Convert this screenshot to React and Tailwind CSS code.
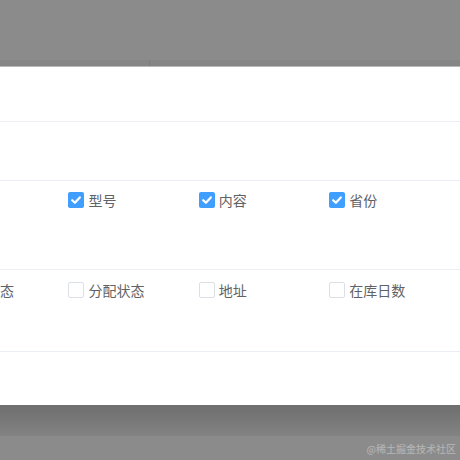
import React from 'react';

const rowOne = [
  { label: '编号', checked: true },
  { label: '型号', checked: true },
  { label: '内容', checked: true },
  { label: '省份', checked: true },
];

const rowTwo = [
  { label: '库存状态', checked: false },
  { label: '分配状态', checked: false },
  { label: '地址', checked: false },
  { label: '在库日数', checked: false },
];

const Check = ({ label, checked }) => (
  <div className="w-[130.4px] shrink-0 flex items-center gap-[4px]">
    {checked ? (
      <span className="w-[16px] h-[16px] rounded-[2px] bg-[#409eff] flex items-center justify-center">
        <svg width="12" height="12" viewBox="0 0 12 12" fill="none">
          <path d="M2.2 6.2 L4.9 8.8 L9.8 3.4" stroke="#fff" strokeWidth="2.2" strokeLinecap="round" strokeLinejoin="round" />
        </svg>
      </span>
    ) : (
      <span className="w-[16px] h-[16px] rounded-[2px] bg-white border border-[#dcdfe6]" />
    )}
    <span className="text-[14px] leading-[16px] text-[#606266] whitespace-nowrap">{label}</span>
  </div>
);

const App = () => {
  return (
    <div
      className="w-[460px] h-[460px] overflow-hidden bg-[#8b8b8b] flex flex-col"
      style={{ fontFamily: '"Noto Sans CJK SC", "Noto Sans", sans-serif' }}
    >
      {/* page behind the mask */}
      <div className="h-[60px] shrink-0" />
      <div className="h-[6px] shrink-0 bg-[#858585] flex">
        <div className="w-[150px] border-r border-[#7c7c7c]" />
      </div>
      <div className="h-[1px] shrink-0 bg-[#b9b9b9]" />

      {/* dialog body */}
      <div className="bg-white shrink-0 flex flex-col">
        <div className="h-[55px] border-b border-[#ebeef5]" />
        <div className="h-[59px] border-b border-[#ebeef5]" />
        <div className="h-[89px] border-b border-[#ebeef5] pt-[11px]">
          <div className="flex -ml-[62px]">
            {rowOne.map((c) => (
              <Check key={c.label} {...c} />
            ))}
            <Check label="品牌" checked />
          </div>
        </div>
        <div className="h-[82px] border-b border-[#ebeef5] pt-[12px]">
          <div className="flex -ml-[62px]">
            {rowTwo.map((c) => (
              <Check key={c.label} {...c} />
            ))}
            <Check label="备注" checked={false} />
          </div>
        </div>
        <div className="h-[53px]" />
      </div>

      <div className="h-[31px] shrink-0 bg-gradient-to-b from-[#6e6e6e] to-[#838383]" />
      <div className="flex-1 flex items-center justify-end pr-[4px]">
        <span className="text-[10px] text-[#b4b4b4] [text-shadow:0_0_1px_#9a9a9a]">
          @稀土掘金技术社区
        </span>
      </div>
    </div>
  );
};

export default App;
